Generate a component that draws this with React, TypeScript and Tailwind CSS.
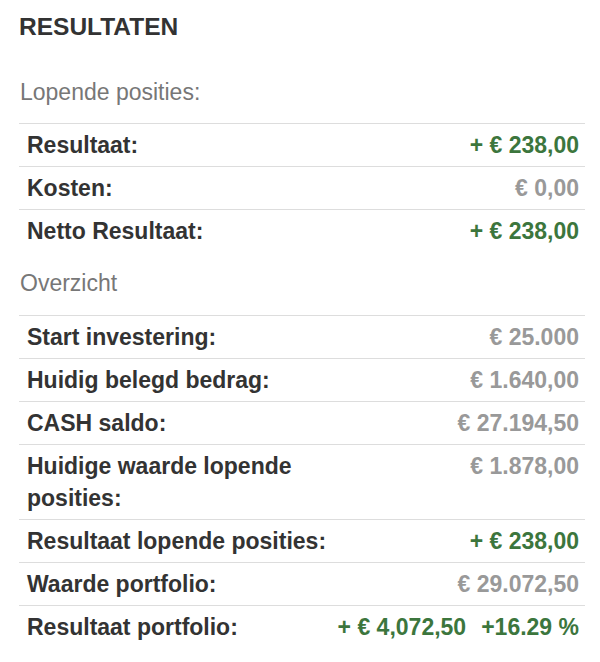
const lopende = [
  { label: "Resultaat:", value: "+ € 238,00", tone: "green" },
  { label: "Kosten:", value: "€ 0,00", tone: "gray" },
  { label: "Netto Resultaat:", value: "+ € 238,00", tone: "green" },
];

const overzicht = [
  { label: "Start investering:", value: "€ 25.000", tone: "gray" },
  { label: "Huidig belegd bedrag:", value: "€ 1.640,00", tone: "gray" },
  { label: "CASH saldo:", value: "€ 27.194,50", tone: "gray" },
  { label: "Huidige waarde lopende posities:", value: "€ 1.878,00", tone: "gray" },
  { label: "Resultaat lopende posities:", value: "+ € 238,00", tone: "green" },
  { label: "Waarde portfolio:", value: "€ 29.072,50", tone: "gray" },
];

type Row = { label: string; value: string; tone: string };

function ResultRow({ row, children }: { row: Row; children?: React.ReactNode }) {
  return (
    <div className="flex border-t border-[#dddddd] py-[5px] leading-[32px]">
      <div className="w-[330px] shrink pl-2 font-bold text-[#333333]">{row.label}</div>
      <div
        className={`ml-auto shrink-0 whitespace-nowrap pr-[6px] text-right font-bold ${
          row.tone === "green" ? "text-[#3c763d]" : "text-[#999999]"
        }`}
      >
        {children ?? row.value}
      </div>
    </div>
  );
}

export default function App() {
  return (
    <div className="h-[662px] w-[600px] bg-white pl-[19px] pr-[15px] pt-[11px] font-['Liberation_Sans',Arial,sans-serif] text-[23px] text-[#333333]">
      {/* Header */}
      <h2 className="text-[24.5px] font-bold leading-[32px] text-[#333333]">RESULTATEN</h2>

      <p className="mt-[33px] mb-[15px] pl-px leading-[32px] text-[#777777]">Lopende posities:</p>
      <div>
        {lopende.map((row) => (
          <ResultRow key={row.label} row={row} />
        ))}
      </div>

      <p className="mt-[15px] mb-[16px] pl-px leading-[32px] text-[#777777]">Overzicht</p>
      <div>
        {overzicht.map((row) => (
          <ResultRow key={row.label} row={row} />
        ))}
        <ResultRow row={{ label: "Resultaat portfolio:", value: "", tone: "green" }}>
          <span>+ € 4,072,50</span>
          <span className="ml-[15px]">+16.29 %</span>
        </ResultRow>
      </div>
    </div>
  );
}
